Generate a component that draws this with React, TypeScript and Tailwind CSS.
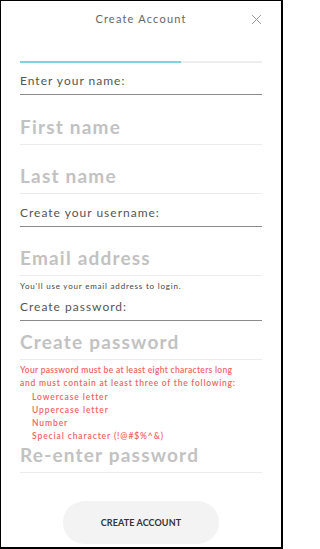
import React from "react";

const font = { fontFamily: "Lato, 'Open Sans', sans-serif" };

function Label({ text, h }: { text: string; h: string }) {
  return (
    <div className={`${h} flex items-end pb-[6px] border-b border-[#8a8a8a]`}>
      <span className="text-[12px] leading-[14px] tracking-[1px] text-[#555] whitespace-nowrap">{text}</span>
    </div>
  );
}

function Input({ text, h }: { text: string; h: string }) {
  return (
    <div className={`${h} flex items-end pb-[8px] border-b border-[#ececec]`}>
      <span className="text-[19px] leading-[18px] font-bold tracking-[1.2px] text-[#c2c2c2] whitespace-nowrap">{text}</span>
    </div>
  );
}

export default function App() {
  return (
    <div className="w-[283px] h-[549px] bg-white border border-black border-r-2 border-b-2 box-border overflow-hidden" style={font}>
      <div className="h-[36px] relative flex items-center justify-center">
        <span className="text-[11px] tracking-[1.2px] text-[#666]">Create Account</span>
        <svg className="absolute right-[19px] top-[13px]" width="11" height="11" viewBox="0 0 11 11">
          <path d="M1 1 L10 10 M10 1 L1 10" stroke="#9a9a9a" strokeWidth="1" />
        </svg>
      </div>
      <div className="px-[19px]">
        <div className="mt-[24px] h-[2px] bg-[#eeeeee] flex">
          <div className="w-[161px] h-[2px] bg-[#7fd3dc]" />
        </div>
        <Label text="Enter your name:" h="h-[32px]" />
        <Input text="First name" h="h-[50px]" />
        <Input text="Last name" h="h-[49px]" />
        <Label text="Create your username:" h="h-[33px]" />
        <Input text="Email address" h="h-[49px]" />
        <div className="h-[20px] flex items-center">
          <span className="text-[8px] tracking-[0.8px] text-[#444] whitespace-nowrap">You'll use your email address to login.</span>
        </div>
        <Label text="Create password:" h="h-[25px]" />
        <Input text="Create password" h="h-[39px]" />
        <div className="pt-[4px] text-[8.5px] leading-[13.3px] text-[#f26464] font-semibold whitespace-nowrap">
          <div className="tracking-[0.3px]">Your password must be at least eight characters long</div>
          <div className="tracking-[0.75px]">and must contain at least three of the following:</div>
          <div className="pl-[12px] tracking-[0.9px]">Lowercase letter</div>
          <div className="pl-[12px] tracking-[0.9px]">Uppercase letter</div>
          <div className="pl-[12px] tracking-[0.9px]">Number</div>
          <div className="pl-[12px] tracking-[0.9px]">Special character (!@#$%^&amp;)</div>
        </div>
        <Input text="Re-enter password" h="h-[29px]" />
        <div className="flex justify-center mt-[28px]">
          <div className="w-[156px] h-[43px] rounded-full bg-[#f3f3f3] flex items-center justify-center">
            <span className="text-[9px] font-bold text-[#333] tracking-[0.1px]">CREATE ACCOUNT</span>
          </div>
        </div>
      </div>
    </div>
  );
}
